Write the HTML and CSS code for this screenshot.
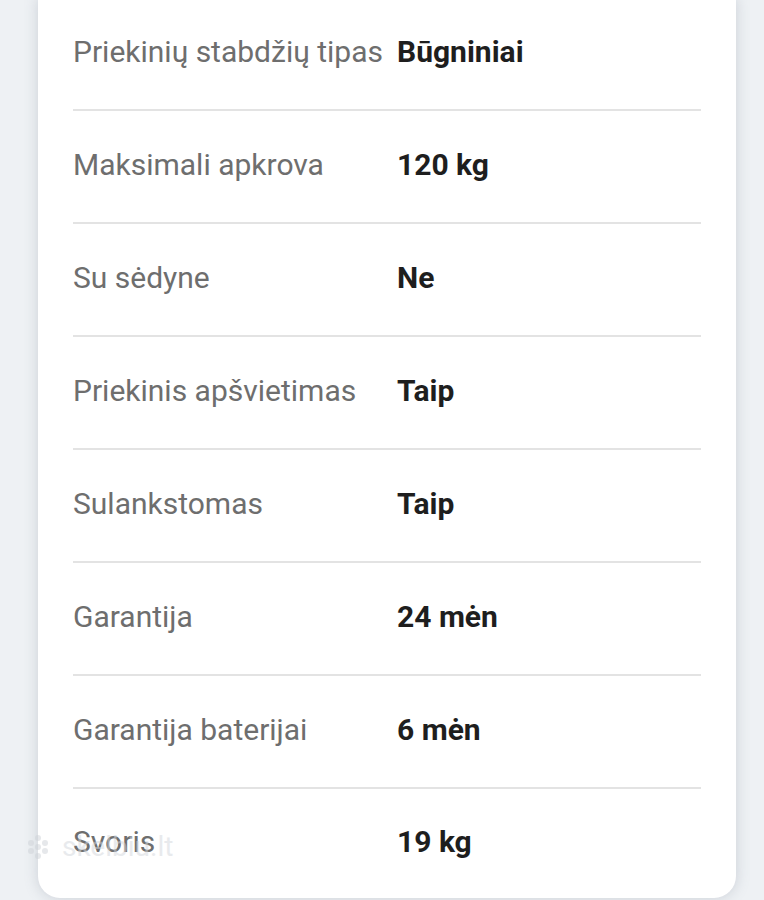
FILE: index.html
```html
<!DOCTYPE html>
<html>
<head>
    <meta charset="utf-8">
    <title>Specifikacijos</title>
    <link rel="stylesheet" href="styles.css">
</head>
<body>
    <div class="card">
        <div class="specs">
            <div class="spec-row">
                <span class="spec-label">Priekinių stabdžių tipas</span>
                <span class="spec-value">Būgniniai</span>
            </div>
            <div class="spec-row">
                <span class="spec-label">Maksimali apkrova</span>
                <span class="spec-value">120 kg</span>
            </div>
            <div class="spec-row">
                <span class="spec-label">Su sėdyne</span>
                <span class="spec-value">Ne</span>
            </div>
            <div class="spec-row">
                <span class="spec-label">Priekinis apšvietimas</span>
                <span class="spec-value">Taip</span>
            </div>
            <div class="spec-row">
                <span class="spec-label">Sulankstomas</span>
                <span class="spec-value">Taip</span>
            </div>
            <div class="spec-row">
                <span class="spec-label">Garantija</span>
                <span class="spec-value">24 mėn</span>
            </div>
            <div class="spec-row">
                <span class="spec-label">Garantija baterijai</span>
                <span class="spec-value">6 mėn</span>
            </div>
            <div class="spec-row">
                <span class="spec-label">Svoris</span>
                <span class="spec-value">19 kg</span>
            </div>
        </div>
    </div>

    <div class="watermark">
        <svg width="40" height="30" viewBox="0 0 40 30">
            <g fill="#cfd3d8">
                <circle cx="20" cy="6" r="3"/>
                <circle cx="13" cy="11" r="3"/>
                <circle cx="27" cy="11" r="3"/>
                <circle cx="20" cy="15" r="3"/>
                <circle cx="13" cy="19" r="3"/>
                <circle cx="27" cy="19" r="3"/>
                <circle cx="20" cy="24" r="3"/>
            </g>
        </svg>
        <span>skelbiu.lt</span>
    </div>
</body>
</html>
```

FILE: styles.css
```css
body {
    font-family: 'Roboto', 'Liberation Sans', sans-serif;
    background-color: #eef1f4;
    margin: 0;
    height: 900px;
    overflow: hidden;
    position: relative;
}

.card {
    background-color: #ffffff;
    margin: -2px 28px 0 38px;
    padding: 0 35px;
    border-radius: 0 0 22px 22px;
    box-shadow: 0 0 14px rgba(120, 130, 145, 0.3);
}

.spec-row {
    display: grid;
    grid-template-columns: 324px 1fr;
    align-items: center;
    height: 111px;
    border-bottom: 2px solid #e3e3e3;
    font-size: 30px;
    line-height: 1;
}

.spec-row .spec-label,
.spec-row .spec-value {
    margin-top: -4px;
}

.spec-row:last-child {
    border-bottom: none;
    height: 109px;
}

.spec-label {
    color: #6e6e6e;
}

.spec-value {
    color: #1e1e1e;
    font-weight: bold;
}

.watermark {
    position: absolute;
    left: 18px;
    top: 830px;
    display: flex;
    align-items: center;
    gap: 4px;
    opacity: 0.5;
    color: #d3d7dc;
    font-size: 28px;
}
```
